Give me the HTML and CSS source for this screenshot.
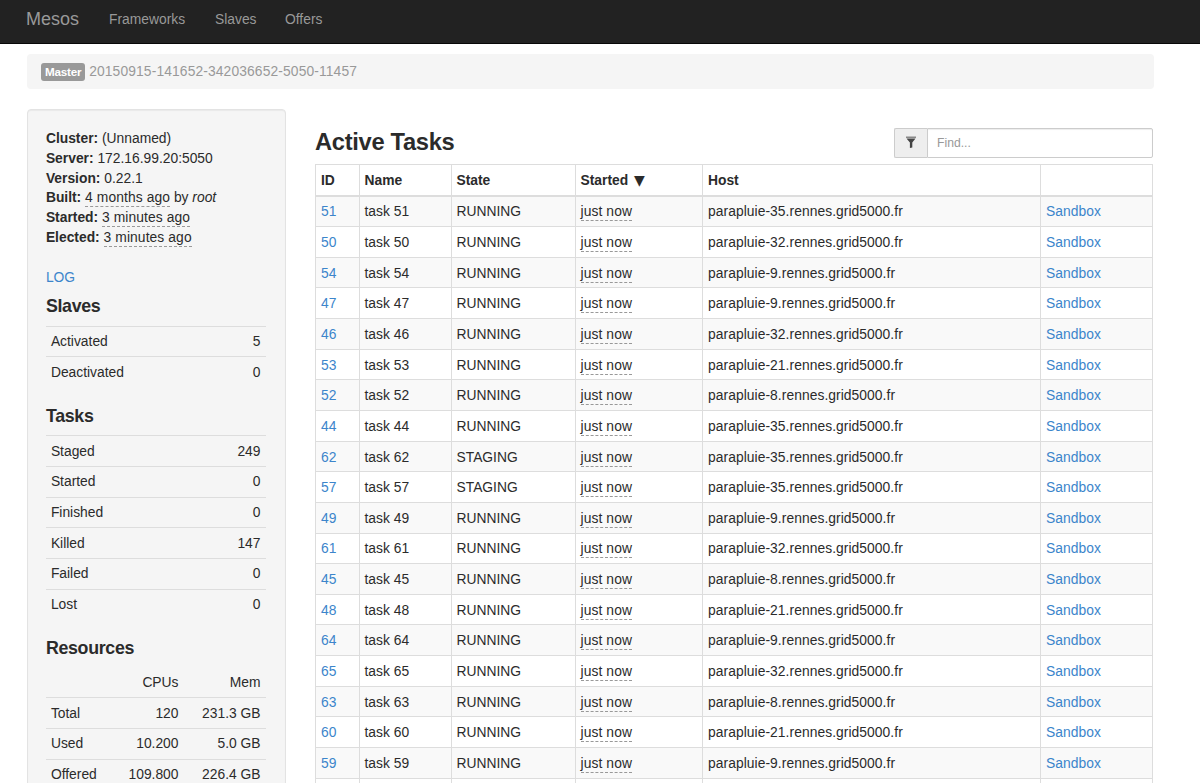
FILE: index.html
```html
<!DOCTYPE html>
<html>
<head>
  <meta charset="utf-8">
  <title>Mesos</title>
  <link rel="stylesheet" href="styles.css">
</head>
<body>
  <nav class="navbar">
    <a class="navbar-brand" href="#">Mesos</a>
    <a class="nav-link nav-frameworks" href="#">Frameworks</a>
    <a class="nav-link nav-slaves" href="#">Slaves</a>
    <a class="nav-link" href="#">Offers</a>
  </nav>

  <div class="container">
    <div class="breadcrumb">
      <span class="badge">Master</span>
      <span class="master-id">20150915-141652-342036652-5050-11457</span>
    </div>

    <div class="row">
      <div class="well">
        <dl class="info">
          <div><dt>Cluster:</dt> <dd>(Unnamed)</dd></div>
          <div><dt>Server:</dt> <dd>172.16.99.20:5050</dd></div>
          <div><dt>Version:</dt> <dd>0.22.1</dd></div>
          <div><dt>Built:</dt> <dd><span class="time">4 months ago</span> by <i>root</i></dd></div>
          <div><dt>Started:</dt> <dd><span class="time">3 minutes ago</span></dd></div>
          <div><dt>Elected:</dt> <dd><span class="time">3 minutes ago</span></dd></div>
        </dl>
        <p class="log"><a href="#">LOG</a></p>

        <h4>Slaves</h4>
        <table class="stats">
          <tr><td>Activated</td><td>5</td></tr>
          <tr><td>Deactivated</td><td>0</td></tr>
        </table>

        <h4>Tasks</h4>
        <table class="stats">
          <tr><td>Staged</td><td>249</td></tr>
          <tr><td>Started</td><td>0</td></tr>
          <tr><td>Finished</td><td>0</td></tr>
          <tr><td>Killed</td><td>147</td></tr>
          <tr><td>Failed</td><td>0</td></tr>
          <tr><td>Lost</td><td>0</td></tr>
        </table>

        <h4>Resources</h4>
        <table class="stats resources">
          <tr class="stats-head"><td></td><td>CPUs</td><td>Mem</td></tr>
          <tr><td>Total</td><td>120</td><td>231.3 GB</td></tr>
          <tr><td>Used</td><td>10.200</td><td>5.0 GB</td></tr>
          <tr><td>Offered</td><td>109.800</td><td>226.4 GB</td></tr>
        </table>
      </div>

      <div class="main">
        <div class="table-header">
          <h2>Active Tasks</h2>
          <div class="input-group">
            <span class="input-addon">
              <svg width="12" height="13" viewBox="0 0 12 13">
                <path d="M1 0.5h10v1.5H1z" fill="#888"/>
                <path d="M1.5 2.5h9L7.3 6.5v5L4.9 12V6.5z" fill="#444"/>
              </svg>
            </span>
            <input type="text" placeholder="Find...">
          </div>
        </div>

        <table class="tasks">
          <colgroup>
            <col class="col-id"><col class="col-name"><col class="col-state">
            <col class="col-started"><col class="col-host"><col class="col-sandbox">
          </colgroup>
          <thead>
            <tr><th>ID</th><th>Name</th><th>State</th><th>Started <span class="sort">▼</span></th><th>Host</th><th></th></tr>
          </thead>
          <tbody>
            <tr><td><a href="#">51</a></td><td>task 51</td><td>RUNNING</td><td><span class="time">just now</span></td><td>parapluie-35.rennes.grid5000.fr</td><td><a href="#">Sandbox</a></td></tr>
            <tr><td><a href="#">50</a></td><td>task 50</td><td>RUNNING</td><td><span class="time">just now</span></td><td>parapluie-32.rennes.grid5000.fr</td><td><a href="#">Sandbox</a></td></tr>
            <tr><td><a href="#">54</a></td><td>task 54</td><td>RUNNING</td><td><span class="time">just now</span></td><td>parapluie-9.rennes.grid5000.fr</td><td><a href="#">Sandbox</a></td></tr>
            <tr><td><a href="#">47</a></td><td>task 47</td><td>RUNNING</td><td><span class="time">just now</span></td><td>parapluie-9.rennes.grid5000.fr</td><td><a href="#">Sandbox</a></td></tr>
            <tr><td><a href="#">46</a></td><td>task 46</td><td>RUNNING</td><td><span class="time">just now</span></td><td>parapluie-32.rennes.grid5000.fr</td><td><a href="#">Sandbox</a></td></tr>
            <tr><td><a href="#">53</a></td><td>task 53</td><td>RUNNING</td><td><span class="time">just now</span></td><td>parapluie-21.rennes.grid5000.fr</td><td><a href="#">Sandbox</a></td></tr>
            <tr><td><a href="#">52</a></td><td>task 52</td><td>RUNNING</td><td><span class="time">just now</span></td><td>parapluie-8.rennes.grid5000.fr</td><td><a href="#">Sandbox</a></td></tr>
            <tr><td><a href="#">44</a></td><td>task 44</td><td>RUNNING</td><td><span class="time">just now</span></td><td>parapluie-35.rennes.grid5000.fr</td><td><a href="#">Sandbox</a></td></tr>
            <tr><td><a href="#">62</a></td><td>task 62</td><td>STAGING</td><td><span class="time">just now</span></td><td>parapluie-35.rennes.grid5000.fr</td><td><a href="#">Sandbox</a></td></tr>
            <tr><td><a href="#">57</a></td><td>task 57</td><td>STAGING</td><td><span class="time">just now</span></td><td>parapluie-35.rennes.grid5000.fr</td><td><a href="#">Sandbox</a></td></tr>
            <tr><td><a href="#">49</a></td><td>task 49</td><td>RUNNING</td><td><span class="time">just now</span></td><td>parapluie-9.rennes.grid5000.fr</td><td><a href="#">Sandbox</a></td></tr>
            <tr><td><a href="#">61</a></td><td>task 61</td><td>RUNNING</td><td><span class="time">just now</span></td><td>parapluie-32.rennes.grid5000.fr</td><td><a href="#">Sandbox</a></td></tr>
            <tr><td><a href="#">45</a></td><td>task 45</td><td>RUNNING</td><td><span class="time">just now</span></td><td>parapluie-8.rennes.grid5000.fr</td><td><a href="#">Sandbox</a></td></tr>
            <tr><td><a href="#">48</a></td><td>task 48</td><td>RUNNING</td><td><span class="time">just now</span></td><td>parapluie-21.rennes.grid5000.fr</td><td><a href="#">Sandbox</a></td></tr>
            <tr><td><a href="#">64</a></td><td>task 64</td><td>RUNNING</td><td><span class="time">just now</span></td><td>parapluie-9.rennes.grid5000.fr</td><td><a href="#">Sandbox</a></td></tr>
            <tr><td><a href="#">65</a></td><td>task 65</td><td>RUNNING</td><td><span class="time">just now</span></td><td>parapluie-32.rennes.grid5000.fr</td><td><a href="#">Sandbox</a></td></tr>
            <tr><td><a href="#">63</a></td><td>task 63</td><td>RUNNING</td><td><span class="time">just now</span></td><td>parapluie-8.rennes.grid5000.fr</td><td><a href="#">Sandbox</a></td></tr>
            <tr><td><a href="#">60</a></td><td>task 60</td><td>RUNNING</td><td><span class="time">just now</span></td><td>parapluie-21.rennes.grid5000.fr</td><td><a href="#">Sandbox</a></td></tr>
            <tr><td><a href="#">59</a></td><td>task 59</td><td>RUNNING</td><td><span class="time">just now</span></td><td>parapluie-9.rennes.grid5000.fr</td><td><a href="#">Sandbox</a></td></tr>
            <tr><td></td><td></td><td></td><td></td><td></td><td></td></tr>
          </tbody>
        </table>
      </div>
    </div>
  </div>
</body>
</html>
```

FILE: styles.css
```css
* {
  box-sizing: border-box;
}
body {
  margin: 0;
  height: 783px;
  overflow: hidden;
  font-family: "Liberation Sans", Arial, sans-serif;
  font-size: 13.83px;
  line-height: 19.76px;
  color: #2b2b2b;
  background-color: #fff;
}
a {
  color: #3c85cb;
  text-decoration: none;
}
.navbar {
  display: flex;
  height: 44px;
  padding: 10px 0 0 26px;
  background-color: #222;
  border-bottom: 1px solid #080808;
}
.navbar-brand {
  width: 83px;
  font-size: 18px;
  color: #999;
}
.nav-link {
  color: #999;
}
.nav-frameworks {
  width: 106px;
}
.nav-slaves {
  width: 70px;
}
.container {
  width: 1127px;
  margin: 9.5px 0 0 26.5px;
}
.breadcrumb {
  display: flex;
  align-items: center;
  gap: 4px;
  height: 35.5px;
  padding: 1px 14.5px 0;
  background-color: #f5f5f5;
  border-radius: 4px;
}
.badge {
  height: 18px;
  padding: 0 4px;
  font-size: 11.7px;
  font-weight: bold;
  line-height: 18px;
  letter-spacing: -0.25px;
  color: #fff;
  background-color: #999;
  border-radius: 3px;
}
.master-id {
  letter-spacing: 0.12px;
  color: #999;
}
.row {
  display: flex;
  align-items: flex-start;
  gap: 29.5px;
  margin-top: 20px;
}
.well {
  width: 259px;
  padding: 18.8px 19px 18.8px 18.4px;
  background-color: #f5f5f5;
  border: 1px solid #e3e3e3;
  border-radius: 4px;
  box-shadow: inset 0 1px 1px rgba(0, 0, 0, 0.05);
}
.info {
  margin: 0;
  padding-top: 0.4px;
}
.info dt {
  display: inline;
  font-weight: bold;
}
.info dd {
  display: inline;
  margin: 0;
}
.time {
  padding-bottom: 1px;
  letter-spacing: 0.1px;
  border-bottom: 1px dashed #999;
}
.log {
  margin: 19.76px 0 9.9px;
}
h4 {
  margin: 0 0 8.8px;
  font-size: 17.8px;
  font-weight: bold;
  line-height: 19.6px;
  letter-spacing: -0.3px;
}
.stats {
  width: 100%;
  margin-bottom: 20.1px;
  border-spacing: 0;
}
.stats td {
  height: 30.65px;
  padding: 1px 5px 0;
  border-top: 1px solid #ddd;
  text-align: right;
}
.stats td:first-child {
  text-align: left;
}
.stats .stats-head td {
  height: 29.6px;
  padding-top: 0;
  border-top: none;
}
.resources td:last-child {
  width: 82px;
}
.main {
  width: 838px;
}
.table-header {
  display: flex;
  justify-content: space-between;
  align-items: flex-start;
  height: 55px;
  padding-top: 19px;
}
h2 {
  margin: 0;
  font-size: 23.7px;
  font-weight: bold;
  line-height: 28px;
  letter-spacing: -0.3px;
}
.input-group {
  display: flex;
  width: 259px;
  height: 30px;
}
.input-addon {
  display: flex;
  justify-content: center;
  align-items: center;
  width: 33px;
  padding-bottom: 2px;
  background-color: #eee;
  border: 1px solid #ccc;
  border-right: none;
  border-radius: 2px 0 0 2px;
}
.input-group input {
  flex: 1;
  padding: 0 9px;
  font-family: inherit;
  font-size: 12.2px;
  border: 1px solid #ccc;
  border-radius: 0 2px 2px 0;
  box-shadow: inset 0 1px 1px rgba(0, 0, 0, 0.075);
}
.input-group input::placeholder {
  color: #999;
}
.tasks {
  width: 838px;
  table-layout: fixed;
  border-spacing: 0;
  border-top: 1px solid #ddd;
  border-left: 1px solid #ddd;
}
.tasks th,
.tasks td {
  height: 30.65px;
  padding: 2px 5px 0;
  text-align: left;
  border-right: 1px solid #ddd;
  border-bottom: 1px solid #ddd;
}
.tasks td:nth-child(n+5) {
  letter-spacing: 0.06px;
}
.tasks th {
  height: 31.5px;
  border-bottom-width: 2px;
}
.tasks tbody tr:nth-child(odd) {
  background-color: #f9f9f9;
}
.sort {
  display: inline-block;
  margin-left: 2px;
  font-family: "DejaVu Sans", sans-serif;
  font-size: 14px;
  font-weight: normal;
  line-height: 14px;
}
.col-id {
  width: 43.5px;
}
.col-name {
  width: 92px;
}
.col-state {
  width: 124px;
}
.col-started {
  width: 127.5px;
}
.col-host {
  width: 338px;
}
```
